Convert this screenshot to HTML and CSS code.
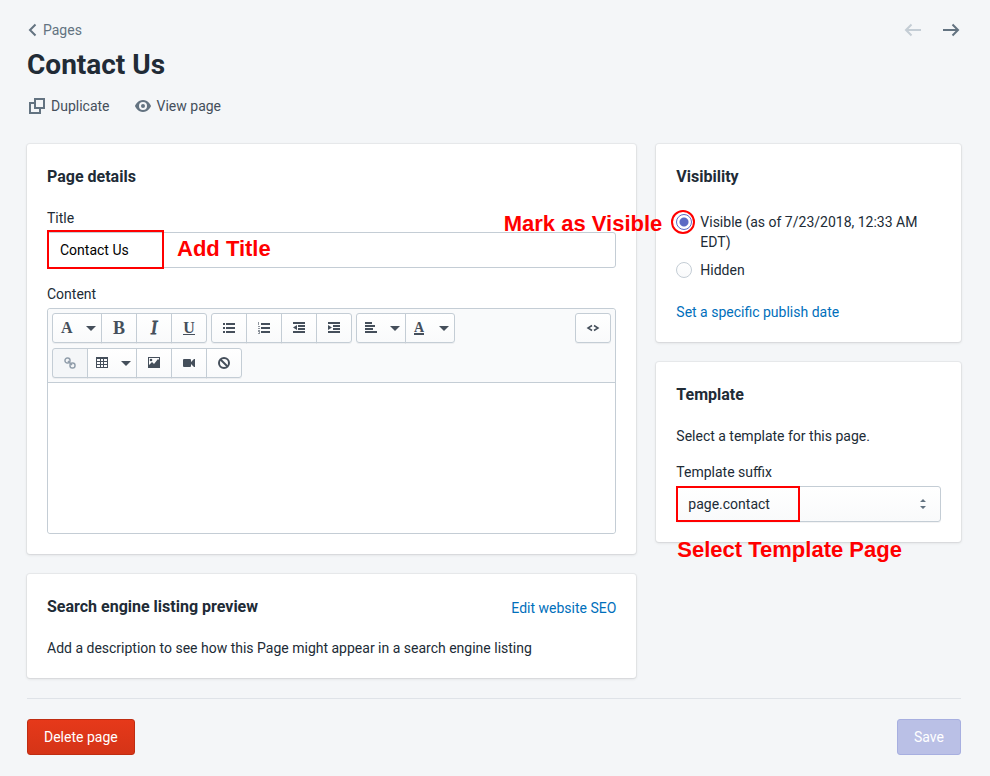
FILE: index.html
```html
<!DOCTYPE html>
<html lang="en">
<head>
<meta charset="utf-8">
<title>Contact Us</title>
<link rel="stylesheet" href="styles.css">
</head>
<body>
<main class="page">
  <header class="page-header">
    <nav class="nav-row" aria-label="Breadcrumb">
      <a class="breadcrumb" href="#">
        <svg class="chevron" viewBox="0 0 10 14"><path d="M7.500 1.500 2 7l5.500 5.500" fill="none" stroke="currentColor" stroke-width="2"/></svg>
        Pages
      </a>
      <div class="pagination">
        <button class="pager" type="button" aria-label="Previous" disabled>
          <svg class="arrow" viewBox="0 0 18 14"><path d="M7.500 1.500 2 7l5.500 5.500M2 7h15" fill="none" stroke="currentColor" stroke-width="2"/></svg>
        </button>
        <button class="pager" type="button" aria-label="Next">
          <svg class="arrow" viewBox="0 0 18 14"><path d="M10.500 1.500 16 7l-5.500 5.500M16 7H1" fill="none" stroke="currentColor" stroke-width="2"/></svg>
        </button>
      </div>
    </nav>
    <h1>Contact Us</h1>
    <div class="actions">
      <a class="action" href="#">
        <svg class="icon" viewBox="0 0 16 16"><path d="M6 1h9v9H6zM6 5H1v10h10v-5" fill="none" stroke="currentColor" stroke-width="2"/></svg>
        Duplicate
      </a>
      <a class="action" href="#">
        <svg class="icon" viewBox="0 0 16 16"><path d="M8 2C3 2 .5 6.500 0 8c.5 1.500 3 6 8 6s7.500-4.500 8-6c-.5-1.500-3-6-8-6zm0 2a4 4 0 1 1 0 8 4 4 0 0 1 0-8z" fill="currentColor" fill-rule="evenodd"/><circle cx="8" cy="8" r="2" fill="currentColor"/></svg>
        View page
      </a>
    </div>
  </header>

  <div class="columns">
    <div class="column">
      <section class="card">
        <h2>Page details</h2>
        <div class="field">
          <label for="title">Title</label>
          <div class="control">
            <input class="text-input" id="title" type="text" value="Contact Us">
            <span class="mark mark-title"></span>
            <strong class="note note-title">Add Title</strong>
            <strong class="note note-visible">Mark as Visible</strong>
          </div>
        </div>
        <div class="field">
          <label for="content">Content</label>
          <div class="editor">
            <div class="toolbar">
              <div class="tools">
                <div class="group">
                  <button class="tool split" type="button" aria-label="Formatting"><span class="glyph small">A</span><span class="caret"></span></button>
                  <button class="tool" type="button" aria-label="Bold"><span class="glyph">B</span></button>
                  <button class="tool" type="button" aria-label="Italic"><span class="glyph italic">I</span></button>
                  <button class="tool" type="button" aria-label="Underline"><span class="glyph underline">U</span></button>
                </div>
                <div class="group">
                  <button class="tool" type="button" aria-label="Bulleted list"><svg class="tool-icon" viewBox="0 0 12 12"><path d="M0 1h2v2H0zM3 1h9v2H3zM0 5h2v2H0zM3 5h9v2H3zM0 9h2v2H0zM3 9h9v2H3z"/></svg></button>
                  <button class="tool" type="button" aria-label="Numbered list"><svg class="tool-icon" viewBox="0 0 12 12"><path d="M3 1h9v2H3zM3 5h9v2H3zM3 9h9v2H3z"/><path opacity=".6" d="M0 0h1v3H0zM0 4h2v1H1v1h1v1H0V6h1V5H0zM0 8h2v4H0v-1h1v-1H0z"/></svg></button>
                  <button class="tool" type="button" aria-label="Outdent"><svg class="tool-icon" viewBox="0 0 12 12"><path d="M0 0h12v2H0zM5 3h7v2H5zM5 6h7v2H5zM0 9h12v2H0zM4 3v5L0 5.500z"/></svg></button>
                  <button class="tool" type="button" aria-label="Indent"><svg class="tool-icon" viewBox="0 0 12 12"><path d="M0 0h12v2H0zM5 3h7v2H5zM5 6h7v2H5zM0 9h12v2H0zM0 3v5l4-2.500z"/></svg></button>
                </div>
                <div class="group">
                  <button class="tool split" type="button" aria-label="Alignment"><svg class="tool-icon" viewBox="0 0 12 12"><path d="M0 0h7v2H0zM0 3h10v2H0zM0 6h8v2H0zM0 9h12v2H0z"/></svg><span class="caret"></span></button>
                  <button class="tool split" type="button" aria-label="Color"><span class="glyph color">A</span><span class="caret"></span></button>
                </div>
                <div class="group">
                  <button class="tool" type="button" aria-label="Insert link" disabled><svg class="tool-icon" viewBox="0 0 12 12"><g fill="none" stroke="currentColor" stroke-width="1.500"><rect x="1" y="1" width="5" height="5" rx="2.300"/><rect x="6" y="6" width="5" height="5" rx="2.300"/><path d="m4 4 4 4"/></g></svg></button>
                  <button class="tool split" type="button" aria-label="Insert table"><svg class="tool-icon" viewBox="0 0 12 12"><path d="M0 0h12v11H0zM1 2v2h3V2zM5 2v2h2V2zM8 2v2h3V2zM1 5v2h3V5zM5 5v2h2V5zM8 5v2h3V5zM1 8v2h3V8zM5 8v2h2V8zM8 8v2h3V8z" fill-rule="evenodd"/></svg><span class="caret"></span></button>
                  <button class="tool" type="button" aria-label="Insert image"><svg class="tool-icon" viewBox="0 0 12 12"><path d="M0 0h12v11H0zM1 1v7l3-3 2 2 4-5 1 1V1z" fill-rule="evenodd"/><circle cx="3" cy="3" r="1.300"/></svg></button>
                  <button class="tool" type="button" aria-label="Insert video"><svg class="tool-icon" viewBox="0 0 12 12"><path d="M1 2h6q1 0 1 1v2l3-3h1v8h-1L8 7v2q0 1-1 1H1q-1 0-1-1V3q0-1 1-1z"/></svg></button>
                  <button class="tool" type="button" aria-label="Clear formatting"><svg class="tool-icon" viewBox="0 0 12 12"><path d="m2.500 2.500 7 7" stroke="currentColor" stroke-width="2"/><circle cx="6" cy="6" r="5" fill="none" stroke="currentColor" stroke-width="2"/></svg></button>
                </div>
              </div>
              <div class="group">
                <button class="tool" type="button" aria-label="Show HTML"><svg class="code-icon" viewBox="0 0 14 10"><path d="M6 2.500 2 5l4 2.500M8 2.500 12 5 8 7.500" fill="none" stroke="currentColor" stroke-width="1.500"/></svg></button>
              </div>
            </div>
            <textarea id="content" class="editor-body"></textarea>
          </div>
        </div>
      </section>

      <section class="card">
        <div class="card-head">
          <h2>Search engine listing preview</h2>
          <a class="link" href="#">Edit website SEO</a>
        </div>
        <p>Add a description to see how this Page might appear in a search engine listing</p>
      </section>
    </div>

    <div class="column">
      <section class="card">
        <h2>Visibility</h2>
        <div class="choices">
          <label class="choice">
            <span class="radio-wrap"><input type="radio" name="visibility" checked><span class="mark mark-radio"></span></span>
            <span>Visible (as of 7/23/2018, 12:33 AM EDT)</span>
          </label>
          <label class="choice">
            <span class="radio-wrap"><input type="radio" name="visibility"></span>
            <span>Hidden</span>
          </label>
        </div>
        <a class="link" href="#">Set a specific publish date</a>
      </section>

      <section class="card">
        <h2>Template</h2>
        <p>Select a template for this page.</p>
        <div class="field">
          <label for="template">Template suffix</label>
          <div class="control">
            <select id="template"><option>page.contact</option></select>
            <svg class="select-icon" viewBox="0 0 6 12"><path d="M3 1 6 4H0zM3 11 0 8h6z" fill="currentColor"/></svg>
            <span class="mark mark-template"></span>
            <strong class="note note-template">Select Template Page</strong>
          </div>
        </div>
      </section>
    </div>
  </div>

  <footer class="page-footer">
    <button class="button danger" type="button">Delete page</button>
    <button class="button primary" type="button" disabled>Save</button>
  </footer>
</main>
</body>
</html>
```
FILE: styles.css
```css
* { box-sizing: border-box; }

body {
  margin: 0;
  background: #f4f6f8;
  color: #212b36;
  font: 14px/20px Roboto, "Liberation Sans", sans-serif;
}

h1, h2, p { margin: 0; }
h1 { font-size: 28px; line-height: 34px; font-weight: 700; margin-top: 8px; }
h2 { font-size: 16px; line-height: 26px; font-weight: 700; margin-bottom: -2px; }
a { text-decoration: none; }
button, input, select, textarea { font: inherit; color: inherit; margin: 0; }
svg { display: block; flex: none; }

.page { padding: 20px 29px 20px 27px; }

.nav-row, .breadcrumb, .pagination, .actions, .action { display: flex; align-items: center; }
.nav-row { justify-content: space-between; }
.breadcrumb { gap: 5px; padding-left: 1px; color: #637381; }
.chevron { width: 10px; height: 14px; }
.pagination { gap: 20px; padding-right: 1px; }
.pager { padding: 0; border: 0; background: none; color: #637381; }
.pager:disabled { color: #c4cdd5; }
.arrow { width: 18px; height: 14px; }

.actions { gap: 25px; margin: 14px 0 28px; padding-left: 2px; }
.action { gap: 6px; color: #454f5b; }
.icon { width: 16px; height: 16px; color: #637381; }

.columns { display: grid; grid-template-columns: minmax(0, 2fr) minmax(0, 1fr); gap: 20px; align-items: start; }
.column { display: flex; flex-direction: column; gap: 20px; }

.card {
  display: flex;
  flex-direction: column;
  gap: 20px;
  padding: 20px;
  background: #fff;
  border-radius: 3px;
  box-shadow: 0 0 0 1px rgba(63, 63, 68, 0.05), 0 1px 3px rgba(63, 63, 68, 0.15);
}
.card-head { display: flex; justify-content: space-between; align-items: flex-end; }
.link { color: #006fbb; }

.field { display: flex; flex-direction: column; gap: 4px; }
.field + .field, p + .field { margin-top: -4px; }
.control { position: relative; }

.text-input, select {
  display: block;
  width: 100%;
  height: 36px;
  padding: 0 12px;
  border: 1px solid #c4cdd5;
  border-radius: 3px;
  background: #fff;
}
.text-input { color: #000; }
select { appearance: none; padding: 0 11px; background: linear-gradient(#fff, #f9fafb); box-shadow: 0 1px 0 rgba(22, 29, 37, 0.05); }
.select-icon { position: absolute; right: 15px; top: 12px; width: 6px; height: 12px; color: #637381; }

.editor { border: 1px solid #c4cdd5; border-radius: 3px; }
.toolbar {
  display: flex;
  align-items: flex-start;
  padding: 4px;
  background: #f9fafb;
  border-bottom: 1px solid #c4cdd5;
  border-radius: 3px 3px 0 0;
}
.tools { flex: 1; display: flex; flex-wrap: wrap; gap: 5px 4px; }
.group { display: flex; }
.tool {
  display: flex;
  align-items: center;
  justify-content: center;
  width: 36px;
  height: 30px;
  padding: 0;
  border: 1px solid #c4cdd5;
  background: linear-gradient(#fff, #f9fafb);
  box-shadow: 0 1px 0 rgba(22, 29, 37, 0.05);
  color: #454f5b;
}
.tool + .tool { margin-left: -1px; }
.tool:first-child { border-radius: 3px 0 0 3px; }
.tool:last-child { border-radius: 0 3px 3px 0; }
.tool:only-child { border-radius: 3px; }
.tool:disabled { background: #f4f6f8; color: #919eab; }
.split { width: 50px; justify-content: space-between; padding: 0 5px 0 8px; }
.tool-icon { width: 12px; height: 12px; fill: currentColor; }
.code-icon { width: 14px; height: 10px; }
.glyph { font: bold 18px/20px "Liberation Serif", serif; }
.small { font-size: 16px; }
.italic { font-style: italic; font-weight: 400; -webkit-text-stroke: 1px; }
.underline { font-size: 16px; line-height: 12px; border-bottom: 1px solid; }
.color { font-size: 14px; line-height: 11px; border-bottom: 2px solid; }
.caret { border: 5px solid transparent; border-top-color: currentColor; border-bottom: 0; }
.editor-body { display: block; width: 100%; height: 150px; border: 0; padding: 12px; resize: none; background: #fff; border-radius: 3px; }

.choices { display: flex; flex-direction: column; gap: 8px; padding: 4px 0 2px; }
.choice { display: flex; gap: 8px; }
.radio-wrap { position: relative; flex: none; height: 16px; margin-top: 2px; }
.radio-wrap input {
  appearance: none;
  display: block;
  width: 16px;
  height: 16px;
  border: 1px solid #c4cdd5;
  border-radius: 50%;
  background: linear-gradient(#fff, #f9fafb);
}
.radio-wrap input:checked { border-color: #5c6ac4; background: radial-gradient(circle, #5c6ac4 0 3px, #5c6ac4 4px, #fff 5px); }

.mark { position: absolute; border: 2px solid #f00; pointer-events: none; }
.mark-title { left: 0; top: -2px; width: 117px; height: 39px; }
.mark-radio { left: -5px; top: -4px; width: 24px; height: 24px; border-radius: 50%; }
.mark-template { left: 0; top: 0; width: 124px; height: 36px; }
.note { position: absolute; white-space: nowrap; color: #f00; font: bold 22px/24px "Liberation Sans", sans-serif; z-index: 1; }
.note-title { left: 130px; top: 5px; }
.note-visible { right: -46px; top: -20px; }
.note-template { left: 1px; top: 52px; }

.page-footer { display: flex; justify-content: space-between; margin-top: 20px; padding-top: 20px; border-top: 1px solid #dfe3e8; }
.button { height: 36px; padding: 0 16px; border: 1px solid; border-radius: 3px; color: #fff; }
.danger { border-color: #bf2d12; background: linear-gradient(#e6391a, #d53417); }
.primary { border-color: #a7afe0; background: #bac0e6; color: #fff; }
```
